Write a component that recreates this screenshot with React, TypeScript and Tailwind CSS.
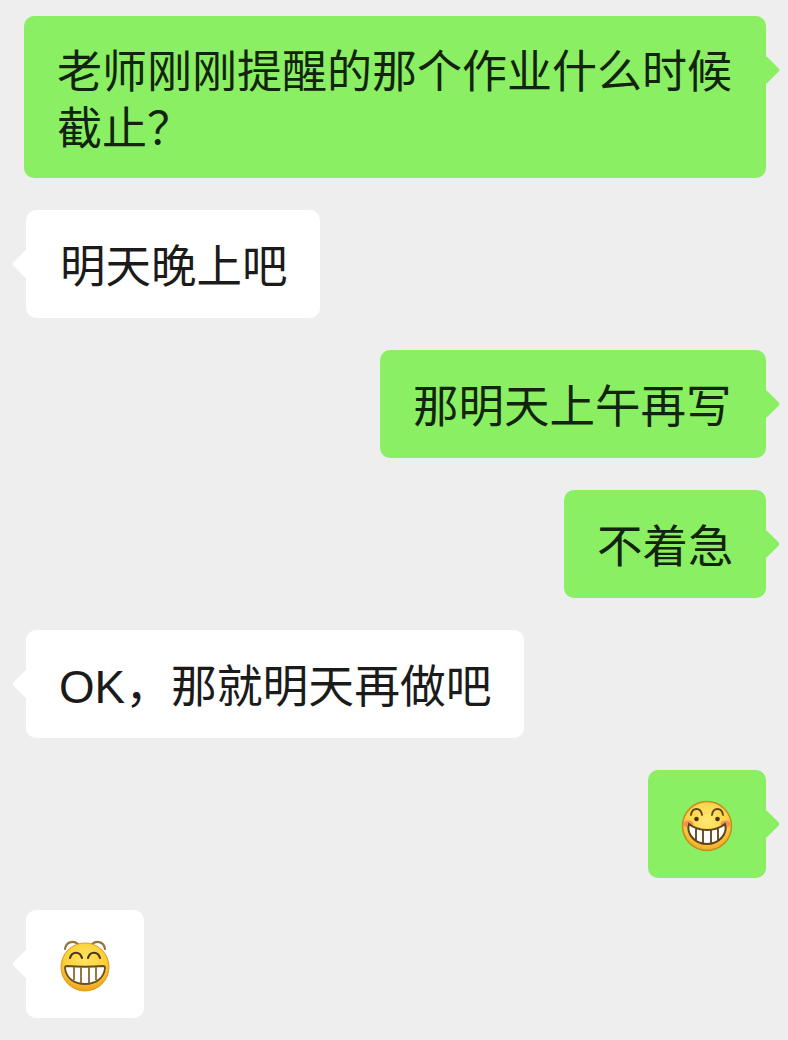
import React, { FC, ReactNode } from "react";

const FaceOne: FC = () => (
  <svg width="52" height="52" viewBox="0 0 52 52">
    <defs>
      <radialGradient id="faceA" cx="50%" cy="38%" r="62%">
        <stop offset="0%" stopColor="#ffe873" />
        <stop offset="65%" stopColor="#fdd447" />
        <stop offset="100%" stopColor="#f0a824" />
      </radialGradient>
    </defs>
    <circle cx="26" cy="26" r="24.5" fill="url(#faceA)" stroke="#c98a1e" strokeWidth="1.5" />
    <ellipse cx="7.5" cy="24" rx="5" ry="3.5" fill="#f0805a" opacity="0.8" />
    <ellipse cx="44.5" cy="24" rx="5" ry="3.5" fill="#f0805a" opacity="0.8" />
    <path d="M10 15c1-8 10-8 11 0M31 15c1-8 10-8 11 0" fill="none" stroke="#5f4216" strokeWidth="1.8" strokeLinecap="round" />
    <circle cx="15.5" cy="19" r="2.3" fill="#4a2f12" />
    <circle cx="36.5" cy="19" r="2.3" fill="#4a2f12" />
    <path d="M8 24c5 4 11 6 18 6s13-2 18-6c3 10-6 20-18 20S5 34 8 24z" fill="#fff" stroke="#5f4216" strokeWidth="2" />
    <path d="M15 29v11M22 30v13M30 30v13M37 29v11" stroke="#5f4216" strokeWidth="1.8" />
  </svg>
);

const FaceTwo: FC = () => (
  <svg width="52" height="54" viewBox="0 0 52 54">
    <defs>
      <radialGradient id="faceB" cx="50%" cy="35%" r="65%">
        <stop offset="0%" stopColor="#ffe45e" />
        <stop offset="65%" stopColor="#fccf3a" />
        <stop offset="100%" stopColor="#eda11c" />
      </radialGradient>
    </defs>
    <path d="M6 11c1-7 8-9 13-5M33 6c5-4 12-2 13 5" fill="none" stroke="#96753a" strokeWidth="2.2" strokeLinecap="round" />
    <circle cx="26" cy="29" r="24" fill="url(#faceB)" stroke="#dd9b22" strokeWidth="1" />
    <path d="M11 20c2-7 10-7 12 0M29 20c2-7 10-7 12 0" fill="none" stroke="#4a3413" strokeWidth="2.2" strokeLinecap="round" />
    <path d="M8 28c12 1 24 1 36 0 2 0 2 1 2 2-1 10-9 16-20 16S7 40 6 30c0-1 0-2 2-2z" fill="#fff" stroke="#6b4e1c" strokeWidth="1.8" />
    <path d="M15 29v13M22 29v16M30 29v16M37 29v13" stroke="#8a6a2e" strokeWidth="1.8" />
  </svg>
);

type BubbleProps = {
  mine?: boolean;
  className: string;
  children: ReactNode;
};

const Bubble: FC<BubbleProps> = ({ mine, className, children }) => (
  <div
    className={
      mine
        ? `relative self-end mr-[22px] rounded-[10px] bg-[#8aef63] text-[#12240e] ${className}`
        : `relative self-start ml-[26px] rounded-[10px] bg-white text-[#1b1b1b] ${className}`
    }
  >
    {mine ? (
      <div className="absolute right-[-10px] top-[44px] w-[20px] h-[20px] rotate-45 rounded-[2px] bg-[#8aef63]" />
    ) : (
      <div className="absolute left-[-10px] top-[44px] w-[20px] h-[20px] rotate-45 rounded-[2px] bg-white" />
    )}
    <div className="relative">{children}</div>
  </div>
);

export default function App() {
  return (
    <div
      className="w-[788px] h-[1040px] overflow-hidden bg-[#eeeeee] pt-4 flex flex-col gap-8 text-[45.5px] leading-[54px] font-normal"
      style={{ fontFamily: '"Liberation Sans", "Noto Sans CJK SC", sans-serif' }}
    >
      <Bubble mine className="w-[742px] h-[162px] pl-[33px] pr-[30px] pt-[28px] text-[45px] leading-[57px]">
        老师刚刚提醒的那个作业什么时候截止？
      </Bubble>
      <Bubble className="w-[294px] h-[108px] pl-[34px] pt-[31px]">明天晚上吧</Bubble>
      <Bubble mine className="w-[386px] h-[108px] pl-[33px] pt-[31px]">那明天上午再写</Bubble>
      <Bubble mine className="w-[202px] h-[108px] pl-[33px] pt-[31px]">不着急</Bubble>
      <Bubble className="w-[498px] h-[108px] pl-[33px] pt-[31px] text-[45.8px]">OK，那就明天再做吧</Bubble>
      <Bubble mine className="w-[118px] h-[108px] pl-[33px] pt-[30px]">
        <FaceOne />
      </Bubble>
      <Bubble className="w-[118px] h-[108px] pl-[33px] pt-[28px]">
        <FaceTwo />
      </Bubble>
    </div>
  );
}
